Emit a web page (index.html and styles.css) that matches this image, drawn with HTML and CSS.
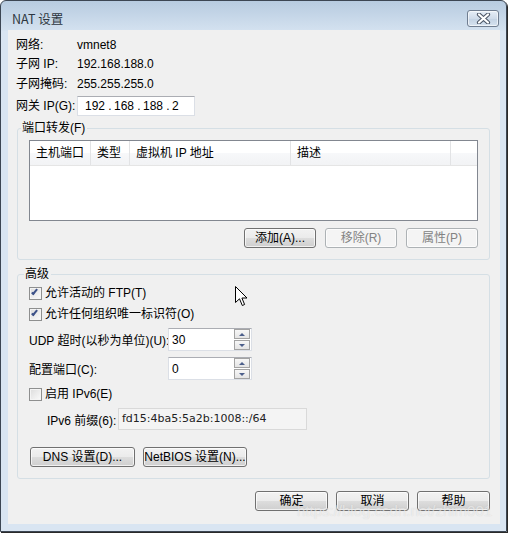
FILE: index.html
```html
<!DOCTYPE html>
<html lang="zh-CN">
<head>
  <meta charset="UTF-8" />
  <title>NAT 设置</title>
  <link rel="stylesheet" href="styles.css">
</head>
<body>
  <div class="window">
    <!-- Title bar -->
    <div class="titlebar">
      <span class="title">NAT 设置</span>
      <div class="close">
        <svg width="15" height="11" viewBox="0 0 15 11">
          <path d="M3 1.5 L12 9.5 M12 1.5 L3 9.5" stroke="#4b5666" stroke-width="4.2" stroke-linecap="round"/>
          <path d="M3 1.5 L12 9.5 M12 1.5 L3 9.5" stroke="#fff" stroke-width="2.2" stroke-linecap="round"/>
        </svg>
      </div>
    </div>

    <div class="client">
      <!-- Network info -->
      <div class="info">
        <div class="row r1"><span class="lbl">网络:</span><span>vmnet8</span></div>
        <div class="row"><span class="lbl">子网 IP:</span><span>192.168.188.0</span></div>
        <div class="row"><span class="lbl">子网掩码:</span><span>255.255.255.0</span></div>
        <div class="row gw">
          <span class="lbl">网关 IP(G):</span>
          <div class="ipbox">
            <span class="oct">192</span><span class="dot">.</span>
            <span class="oct">168</span><span class="dot">.</span>
            <span class="oct">188</span><span class="dot">.</span>
            <span class="oct">2</span>
          </div>
        </div>
      </div>

      <!-- Port forwarding -->
      <fieldset class="group pf">
        <legend>端口转发(F)</legend>
        <div class="list">
          <div class="list-head">
            <span class="col c1">主机端口</span>
            <span class="col c2">类型</span>
            <span class="col c3">虚拟机 IP 地址</span>
            <span class="col c4">描述</span>
            <span class="col c5"></span>
          </div>
        </div>
        <div class="btnrow">
          <button class="btn w72">添加(A)...</button>
          <button class="btn w72" disabled>移除(R)</button>
          <button class="btn w72" disabled>属性(P)</button>
        </div>
      </fieldset>

      <!-- Advanced -->
      <fieldset class="group adv">
        <legend>高级</legend>
        <div class="check c-first"><span class="box on"></span>允许活动的 FTP(T)</div>
        <div class="check"><span class="box on"></span>允许任何组织唯一标识符(O)</div>

        <div class="field udp">
          <span class="flbl">UDP 超时(以秒为单位)(U):</span>
          <div class="spin">
            <span class="val">30</span>
            <div class="arrows"><span class="arr up"></span><span class="arr down"></span></div>
          </div>
        </div>
        <div class="field cfg">
          <span class="flbl">配置端口(C):</span>
          <div class="spin">
            <span class="val">0</span>
            <div class="arrows"><span class="arr up"></span><span class="arr down"></span></div>
          </div>
        </div>

        <div class="check ipv6"><span class="box"></span>启用 IPv6(E)</div>
        <div class="field prefix">
          <span class="plbl">IPv6 前缀(6):</span>
          <div class="ro">fd15:4ba5:5a2b:1008::/64</div>
        </div>

        <div class="btnrow left">
          <button class="btn dns">DNS 设置(D)...</button>
          <button class="btn netbios">NetBIOS 设置(N)...</button>
        </div>
      </fieldset>

      <!-- Dialog buttons -->
      <div class="footer">
        <button class="btn w73">确定</button>
        <button class="btn w73">取消</button>
        <button class="btn w73">帮助</button>
      </div>
    </div>

    <span class="watermark">https://blog.csdn.net/zhim001</span>
    <svg class="cursor" width="13" height="21" viewBox="0 0 13 21">
      <path d="M0.5 0.5 L0.5 16.5 L4.5 12.8 L7.3 19.5 L9.6 18.5 L6.9 12 L12 12 Z" fill="#fff" stroke="#000" stroke-width="1"/>
    </svg>
  </div>
</body>
</html>
```

FILE: styles.css
```css
/* ---------- Base ---------- */
*, *::before, *::after { box-sizing: border-box; margin: 0; padding: 0; }
body {
  width: 509px; height: 533px; overflow: hidden;
  background: #fff;
  font-family: "Liberation Sans", "Noto Sans CJK SC", sans-serif;
  font-size: 12px; color: #000;
}

/* ---------- Window frame ---------- */
.window {
  position: relative;
  width: 507px; height: 532px;
  border: 1px solid #3c4653;
  border-radius: 6px 6px 0 0;
  background: linear-gradient(#b7cbe0 0, #d3e1ef 29px, #d9e5f2 30px);
  padding: 0 6px 6px 7px;
  box-shadow: 1px 1px 0 #2a2a2a;
}
.titlebar { height: 29px; display: flex; align-items: flex-start; }
.title {
  padding: 10px 0 0 4px; line-height: 16px;
  font-family: "Noto Sans CJK SC", "Liberation Sans", sans-serif;
  color: #2d3640; font-size: 12.5px;
}
.close {
  margin: 9px 1px 0 auto;
  width: 32px; height: 17px;
  border: 1px solid #707e91; border-radius: 3px;
  background: linear-gradient(#e6eef7, #d0dcea 50%, #c3d2e3 51%, #d5e2ef);
  display: flex; align-items: center; justify-content: center;
  box-shadow: inset 0 0 0 1px rgba(255,255,255,.6);
}

.client {
  width: 492px; height: 494px;
  background: #f0f0f0;
  display: flex; flex-direction: column;
}

/* ---------- Info rows ---------- */
.info { padding: 5px 0 0 8px; }
.row { display: flex; align-items: center; height: 20px; line-height: 14px; }
.row.r1 { height: 19px; }
.row.gw { margin-top: 2px; }
.lbl { width: 61px; white-space: nowrap; }
.ipbox {
  width: 118px; height: 20px;
  background: #fff;
  border: 1px solid #dbdfe6; border-top-color: #abadb3;
  display: flex; align-items: center; padding-left: 7px;
}
.oct { width: 21px; }
.dot { width: 8px; text-align: center; }

/* ---------- Group boxes ---------- */
.group {
  margin-left: 9px; width: 473px;
  border: 1px solid #d5dfe5; border-radius: 3px;
  padding: 0 11px 11px 11px;
}
.group legend { margin-left: -8px; padding: 0 2px 0 1px; line-height: 14px; height: 14px; }
.group.pf { margin-top: 5px; }
.group.adv { margin-top: 7px; padding-bottom: 11px; }
.group.adv legend { margin-left: -5px; }

/* ---------- List view ---------- */
.list {
  margin-top: 5px;
  width: 449px; height: 81px;
  background: #fff; border: 1px solid #828790;
}
.list-head {
  display: flex; height: 25px;
  background: linear-gradient(#fff 0, #fff 50%, #f7f8fa 51%, #f2f3f5);
  border-bottom: 1px solid #e5e5e5;
}
.col {
  height: 24px; line-height: 24px; padding-left: 6px;
  border-right: 1px solid #e2e3e5; white-space: nowrap;
}
.c1 { width: 61px; }
.c2 { width: 39px; }
.c3 { width: 161px; }
.c4 { width: 160px; }
.c5 { flex: 1; border-right: none; }

/* ---------- Buttons ---------- */
.btnrow { display: flex; justify-content: flex-end; gap: 9px; margin-top: 7px; }
.btnrow.left { justify-content: flex-start; gap: 8px; margin-top: 17px; padding-left: 1px; }
.btn {
  height: 20px;
  font: inherit; color: #000; line-height: 16px; white-space: nowrap;
  border: 1px solid #707070; border-radius: 3px;
  background: linear-gradient(#f2f2f2 0, #ebebeb 50%, #dddddd 51%, #cfcfcf);
  box-shadow: inset 0 0 0 1px rgba(255,255,255,.7);
}
.btn:disabled { border-color: #adb2b5; background: #f4f4f4; color: #838383; }
.w72 { width: 72px; }
.w73 { width: 73px; }
.dns { width: 105px; }
.netbios { width: 104px; }

/* ---------- Check boxes ---------- */
.check { display: flex; align-items: center; height: 20px; line-height: 14px; margin-top: 1px; white-space: nowrap; }
.check.c-first { margin-top: 2px; }
.check.ipv6 { margin-top: 4px; }
.box {
  width: 13px; height: 13px; margin-right: 3px;
  border: 1px solid #8e8f8f;
  background: linear-gradient(135deg, #dcdcdc, #fbfbfb);
  box-shadow: inset 0 0 0 1px #f4f4f4;
  position: relative;
}
.box.on::after {
  content: ""; position: absolute; left: 3px; top: 0px;
  width: 3px; height: 7px;
  border: solid #3d5289; border-width: 0 2px 2px 0;
  transform: rotate(40deg);
}

/* ---------- Spin fields ---------- */
.field { display: flex; align-items: center; }
.field.udp { margin-top: 4px; }
.field.cfg { margin-top: 6px; }
.flbl { width: 139px; flex-shrink: 0; white-space: nowrap; }
.spin {
  width: 84px; height: 23px;
  background: #fff;
  border: 1px solid #dbdfe6; border-top-color: #abadb3;
  display: flex; align-items: center; justify-content: space-between;
  padding-left: 3px;
}
.arrows { display: flex; flex-direction: column; gap: 1px; margin-right: 1px; }
.arr {
  width: 16px; height: 10px;
  border: 1px solid #a3a3a3;
  background: linear-gradient(#f7f7f7, #e4e4e4);
  display: flex; align-items: center; justify-content: center;
}
.arr::after { content: ""; border: 3px solid transparent; }
.arr.up::after { border-bottom: 3px solid #4c5f8b; border-top: 0; }
.arr.down::after { border-top: 3px solid #4c5f8b; border-bottom: 0; }

/* ---------- IPv6 prefix ---------- */
.field.prefix { margin-top: 4px; padding-left: 18px; }
.plbl { width: 71px; white-space: nowrap; }
.ro {
  width: 189px; height: 22px; line-height: 20px;
  background: #f4f4f4; color: #222;
  border: 1px solid #d9d9d9;
  padding-left: 3px;
  font-family: "DejaVu Sans", sans-serif; font-size: 11px;
}

/* ---------- Footer ---------- */
.footer { display: flex; justify-content: flex-end; gap: 8px; margin-top: 12px; padding-right: 10px; }

/* ---------- Overlays ---------- */
.watermark {
  position: absolute; left: 296px; top: 501px;
  font-family: "Liberation Sans", sans-serif; font-size: 15px;
  color: rgba(255,255,255,.55);
  text-shadow: 0 0 1px rgba(150,150,150,.35);
  white-space: nowrap;
}
.cursor { position: absolute; left: 234px; top: 285px; }
```
